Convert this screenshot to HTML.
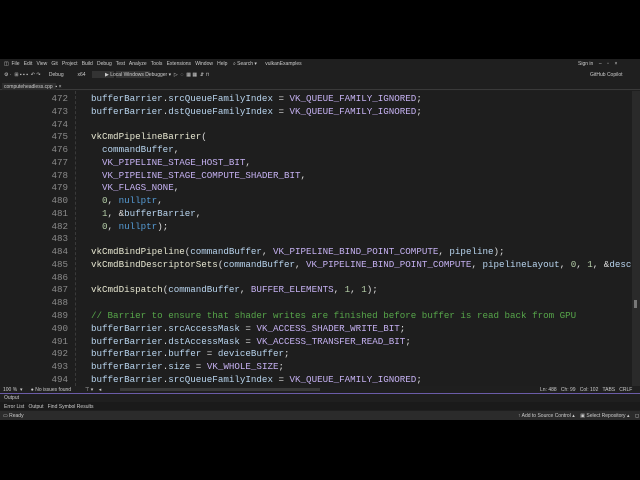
<!DOCTYPE html>
<html><head><style>
*{margin:0;padding:0;box-sizing:border-box}
body{width:640px;height:480px;background:#000;overflow:hidden;position:relative;font-family:"Liberation Sans",sans-serif}
.abs{position:absolute}
.small{font-size:5px;color:#ccc;white-space:pre}
#code{position:absolute;left:0;top:93px;width:632px;font-family:"Liberation Mono",monospace;font-size:9.2px;line-height:12.77px;white-space:pre;color:#dcdcdc}
.ln{display:inline-block;width:68px;text-align:right;color:#8a8a8a;margin-right:23px}
.v{color:#b8d4ee}.f{color:#e6e6d0}.e{color:#c4b0f0}.k{color:#569cd6}.n{color:#b5cea8}.c{color:#57a64a}
</style></head><body>
<div class="abs" style="left:0;top:59px;width:640px;height:361px;background:#1f1f1f"></div>
<div class="abs small" style="left:4px;top:61px">◫  File   Edit   View   Git   Project   Build   Debug   Test   Analyze   Tools   Extensions   Window   Help    ⌕ Search ▾      vulkanExamples</div>
<div class="abs small" style="left:578px;top:61px">Sign in    –    ▫    ×</div>
<div class="abs" style="left:92px;top:71px;width:22px;height:7px;background:#333"></div>
<div class="abs" style="left:116px;top:71px;width:34px;height:7px;background:#333"></div>
<div class="abs small" style="left:4px;top:72px">⚙ ·  ⊞ ▪ ▪ ▪  ↶ ↷      Debug          x64              ▶ Local Windows Debugger ▾  ▷  ◌  ▦ ▦  ⇵ ⊓</div>
<div class="abs small" style="left:590px;top:72px">GitHub Copilot</div>
<div class="abs" style="left:0;top:82px;width:640px;height:8px;background:#1f1f1f;border-bottom:1px solid #3a3a3a"></div>
<div class="abs" style="left:2px;top:83px;width:54px;height:7px;background:#2d2d2d"></div>
<div class="abs small" style="left:4px;top:84px">computeheadless.cpp  ▪ ×</div>
<div class="abs" style="left:0;top:91px;width:632px;height:295px;background:#1e1e1e"></div>
<div class="abs" style="left:75px;top:91px;width:1px;height:295px;border-left:1px dashed #3a3a3a"></div>
<div class="abs" style="left:632px;top:91px;width:8px;height:295px;background:#2a2a2a"></div>
<div class="abs" style="left:634px;top:300px;width:3px;height:8px;background:#777"></div>
<div id="code"><span class="ln">472</span><span class="v">bufferBarrier</span>.<span class="v">srcQueueFamilyIndex</span> = <span class="e">VK_QUEUE_FAMILY_IGNORED</span>;
<span class="ln">473</span><span class="v">bufferBarrier</span>.<span class="v">dstQueueFamilyIndex</span> = <span class="e">VK_QUEUE_FAMILY_IGNORED</span>;
<span class="ln">474</span>
<span class="ln">475</span><span class="f">vkCmdPipelineBarrier</span>(
<span class="ln">476</span>  <span class="v">commandBuffer</span>,
<span class="ln">477</span>  <span class="e">VK_PIPELINE_STAGE_HOST_BIT</span>,
<span class="ln">478</span>  <span class="e">VK_PIPELINE_STAGE_COMPUTE_SHADER_BIT</span>,
<span class="ln">479</span>  <span class="e">VK_FLAGS_NONE</span>,
<span class="ln">480</span>  <span class="n">0</span>, <span class="k">nullptr</span>,
<span class="ln">481</span>  <span class="n">1</span>, &amp;<span class="v">bufferBarrier</span>,
<span class="ln">482</span>  <span class="n">0</span>, <span class="k">nullptr</span>);
<span class="ln">483</span>
<span class="ln">484</span><span class="f">vkCmdBindPipeline</span>(<span class="v">commandBuffer</span>, <span class="e">VK_PIPELINE_BIND_POINT_COMPUTE</span>, <span class="v">pipeline</span>);
<span class="ln">485</span><span class="f">vkCmdBindDescriptorSets</span>(<span class="v">commandBuffer</span>, <span class="e">VK_PIPELINE_BIND_POINT_COMPUTE</span>, <span class="v">pipelineLayout</span>, <span class="n">0</span>, <span class="n">1</span>, &amp;<span class="v">desc</span>
<span class="ln">486</span>
<span class="ln">487</span><span class="f">vkCmdDispatch</span>(<span class="v">commandBuffer</span>, <span class="e">BUFFER_ELEMENTS</span>, <span class="n">1</span>, <span class="n">1</span>);
<span class="ln">488</span>
<span class="ln">489</span><span class="c">// Barrier to ensure that shader writes are finished before buffer is read back from GPU</span>
<span class="ln">490</span><span class="v">bufferBarrier</span>.<span class="v">srcAccessMask</span> = <span class="e">VK_ACCESS_SHADER_WRITE_BIT</span>;
<span class="ln">491</span><span class="v">bufferBarrier</span>.<span class="v">dstAccessMask</span> = <span class="e">VK_ACCESS_TRANSFER_READ_BIT</span>;
<span class="ln">492</span><span class="v">bufferBarrier</span>.<span class="v">buffer</span> = <span class="v">deviceBuffer</span>;
<span class="ln">493</span><span class="v">bufferBarrier</span>.<span class="v">size</span> = <span class="e">VK_WHOLE_SIZE</span>;
<span class="ln">494</span><span class="v">bufferBarrier</span>.<span class="v">srcQueueFamilyIndex</span> = <span class="e">VK_QUEUE_FAMILY_IGNORED</span>;</div>
<div class="abs" style="left:0;top:386px;width:640px;height:7px;background:#1f1f1f"></div>
<div class="abs" style="left:120px;top:388px;width:200px;height:3px;background:#3a3a3a"></div>
<div class="abs small" style="left:3px;top:387px">100 %  ▾      ● No issues found          ⊤ ▾    ◂</div>
<div class="abs small" style="left:540px;top:387px">Ln: 488   Ch: 99   Col: 102   TABS   CRLF</div>
<div class="abs" style="left:0;top:393px;width:640px;height:1px;background:#6b5ca8"></div>
<div class="abs small" style="left:4px;top:395px">Output</div>
<div class="abs" style="left:0;top:402px;width:640px;height:8px;background:#1a1a1a"></div>
<div class="abs small" style="left:4px;top:404px">Error List   Output   Find Symbol Results</div>
<div class="abs" style="left:0;top:411px;width:640px;height:9px;background:#2b2b2b"></div>
<div class="abs small" style="left:3px;top:413px">▭ Ready</div>
<div class="abs small" style="left:518px;top:413px">↑ Add to Source Control ▴    ▣ Select Repository ▴    ◻</div>
</body></html>
